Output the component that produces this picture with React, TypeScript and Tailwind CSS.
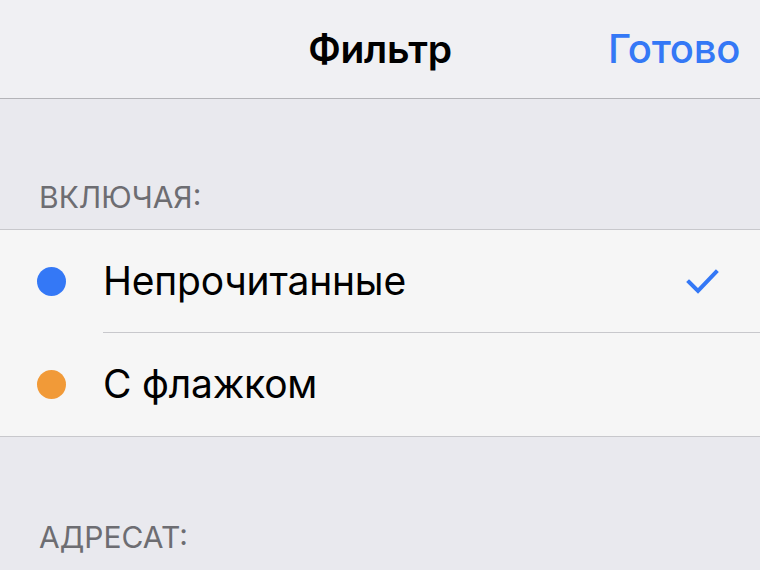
const font = { fontFamily: '"Inter", "Roboto", "Noto Sans", sans-serif' };

function Check() {
  return (
    <svg width="34" height="28" viewBox="0 0 34 28" fill="none">
      <path d="M3 15 L12 24 L30 5" stroke="#3478f6" strokeWidth="4" strokeLinecap="square" />
    </svg>
  );
}

function Row({ color, label, checked, last }: { color: string; label: string; checked?: boolean; last?: boolean }) {
  return (
    <div className="flex h-[103px] items-stretch">
      <div className="flex w-[103px] shrink-0 items-center pl-[37px]">
        <span className="h-[29px] w-[29px] rounded-full" style={{ backgroundColor: color }} />
      </div>
      <div className={`flex flex-1 items-center justify-between pr-[40px] ${last ? "" : "border-b border-[#c8c8cc]"}`}>
        <span className="text-[39px] tracking-[-0.2px] text-black">{label}</span>
        {checked && <Check />}
      </div>
    </div>
  );
}

export default function App() {
  return (
    <div className="h-[570px] w-[760px] overflow-hidden bg-[#e9e9ee]" style={font}>
      <div className="relative flex h-[99px] items-center justify-center border-b border-[#b4b4b8] bg-[#f0f0f3]">
        <span className="text-[39px] font-semibold tracking-[-0.3px] text-black">Фильтр</span>
        <span className="absolute right-[20px] text-[40px] font-medium tracking-[-0.3px] text-[#3478f6]">Готово</span>
      </div>
      <div className="pt-[80px]">
        <div className="px-[39px] pb-[14px] text-[30px] leading-[36px] text-[#6d6d72]">ВКЛЮЧАЯ:</div>
        <div className="border-y border-[#c8c8cc] bg-[#f6f6f6]">
          <Row color="#3478f6" label="Непрочитанные" checked />
          <Row color="#f19a38" label="С флажком" last />
        </div>
        <div className="px-[39px] pt-[82px] text-[30px] leading-[36px] text-[#6d6d72]">АДРЕСАТ:</div>
      </div>
    </div>
  );
}
